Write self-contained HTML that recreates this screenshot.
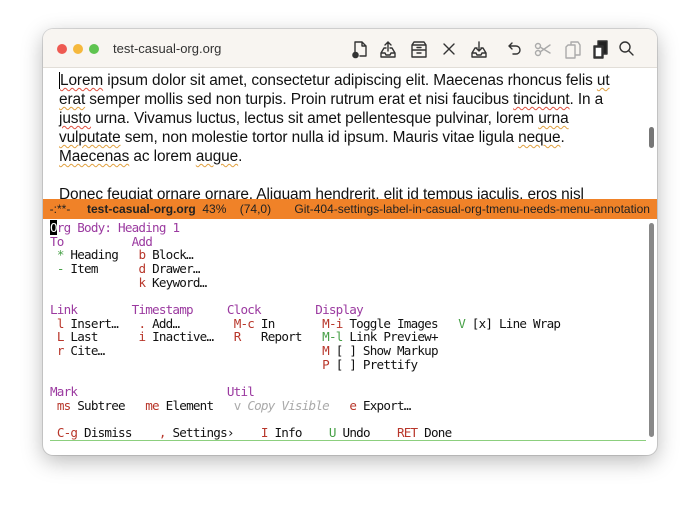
<!DOCTYPE html>
<html><head><style>
*{margin:0;padding:0;box-sizing:border-box}
body{width:700px;height:511px;background:#fff;position:relative;overflow:hidden;font-family:"Liberation Sans",sans-serif}
.win{position:absolute;left:43px;top:29px;width:614px;height:426px;border-radius:10px;background:#fff;box-shadow:0 6px 22px rgba(0,0,0,.28),0 0 0 1px rgba(0,0,0,.12);overflow:hidden}
.tb{position:absolute;left:0;top:0;width:614px;height:39px;background:#f8f5f1;border-bottom:1px solid #e2ded8}
.dot{position:absolute;top:15px;width:10px;height:10px;border-radius:50%}
.title{position:absolute;left:70px;top:12px;font-size:13px;color:#333}
.ic{position:absolute;top:9px}
.txt{position:absolute;left:16px;top:42px;width:590px;font-size:15.4px;line-height:19px;color:#111;letter-spacing:-.1px}
.sq{text-decoration:underline wavy #e05040;text-decoration-thickness:1px;text-underline-offset:2px}
.sq2{text-decoration:underline wavy #e0a040;text-decoration-thickness:1px;text-underline-offset:2px}
.ml{position:absolute;left:0;top:170px;width:614px;height:20px;background:#f08228;font-size:12px;color:#222;line-height:20px;white-space:pre}
.menu{position:absolute;left:7px;top:192px;font-family:"DejaVu Sans Mono",monospace;font-size:12.6px;letter-spacing:-0.78px;line-height:13.65px;white-space:pre;color:#111}
.p{color:#9b3aa0}.r{color:#b8362a}.g{color:#47a047}.d{color:#aaa;font-style:italic}.dv{color:#aaa}
.sb{position:absolute;width:5px;border-radius:3px;background:#777}
</style></head><body>
<div class="win">
<div class="tb">
<div class="dot" style="left:14px;background:#ee5a52"></div>
<div class="dot" style="left:30px;background:#f5b83d"></div>
<div class="dot" style="left:46px;background:#5fc450"></div>
<div class="title">test-casual-org.org</div>
<svg class="ic" style="left:308px" width="300" height="22" viewBox="0 0 300 22" fill="none" stroke="#333" stroke-width="1.4" stroke-linecap="round" stroke-linejoin="round">
<path d="M4 17V4h7l4 4v10H9M11 4v4h4"/><circle cx="4.5" cy="17" r="2.6" fill="#333"/>
<path d="M35 10h-2l-3 5v4h14v-4l-3-5h-2M30 15h4l1 2h4l1-2h4M37 13V4M34 7l3-3 3 3"/>
<path d="M61 7h14v12H61zM61 12h14M61 7l2-3h10l2 3M66 15h4M66 9.5h4"/>
<path d="M93 6l10 10M103 6l-10 10"/>
<path d="M126 10h-2l-3 5v4h14v-4l-3-5h-2M121 15h4l1 2h4l1-2h4M128 4v9M125 10l3 3 3-3"/>
<path d="M158 8h7a4 4 0 010 8h-3M158 8l3-3M158 8l3 3"/>
<g stroke="#aaa"><circle cx="187" cy="8" r="2.5"/><circle cx="187" cy="15" r="2.5"/><path d="M189 9l10 6M189 14l10-7"/>
<path d="M217 7h7v13h-9V9zM220 7V4h7l2 3v10h-5"/></g>
<path d="M243 8h9v12h-9zM247 8V3h9v13h-4" fill="#222"/><path d="M244 9h7v10h-7z" fill="#fff"/>
<circle cx="274" cy="9" r="5"/><path d="M278 13l4 4"/>
</svg>
</div>
<div class="txt"><span style="border-left:1.5px solid #000"></span><span class="sq">Lorem</span> ipsum dolor sit amet, consectetur adipiscing elit. Maecenas rhoncus felis <span class="sq2">ut</span><br><span class="sq2">erat</span> semper mollis sed non turpis. Proin rutrum erat et nisi faucibus <span class="sq">tincidunt</span>. In a<br><span class="sq">justo</span> urna. Vivamus luctus, lectus sit amet pellentesque pulvinar, lorem <span class="sq2">urna</span><br><span class="sq2">vulputate</span> sem, non molestie tortor nulla id ipsum. Mauris vitae ligula <span class="sq2">neque</span>.<br><span class="sq2">Maecenas</span> ac lorem <span class="sq2">augue</span>.<br><br>Donec feugiat ornare ornare. Aliquam hendrerit, elit id tempus iaculis, eros nisl</div>
<div class="sb" style="left:606px;top:98px;height:21px"></div>
<div class="ml">  -:**-     <b>test-casual-org.org</b>  43%    (74,0)       Git-404-settings-label-in-casual-org-tmenu-needs-menu-annotation</div>
<div class="menu"><span style="background:#000;color:#fff">O</span><span class="p">rg Body: Heading 1</span>
<span class="p">To          Add</span>
 <span class="g">*</span> Heading   <span class="r">b</span> Block…
 <span class="g">-</span> Item      <span class="r">d</span> Drawer…
             <span class="r">k</span> Keyword…

<span class="p">Link        Timestamp     Clock        Display</span>
 <span class="r">l</span> Insert…   <span class="r">.</span> Add…        <span class="r">M-c</span> In       <span class="r">M-i</span> Toggle Images   <span class="g">V</span> [x] Line Wrap
 <span class="r">L</span> Last      <span class="r">i</span> Inactive…   <span class="r">R</span>   Report   <span class="g">M-l</span> Link Preview+
 <span class="r">r</span> Cite…                                <span class="r">M</span> [ ] Show Markup
                                        <span class="r">P</span> [ ] Prettify

<span class="p">Mark                      Util</span>
 <span class="r">ms</span> Subtree   <span class="r">me</span> Element   <span class="dv">v</span> <span class="d">Copy Visible</span>   <span class="r">e</span> Export…

 <span class="r">C-g</span> Dismiss    <span class="r">,</span> Settings›    <span class="r">I</span> Info    <span class="g">U</span> Undo    <span class="r">RET</span> Done</div>
<div style="position:absolute;left:7px;top:411px;width:596px;height:1px;background:#8ccf7e"></div>
<div class="sb" style="left:606px;top:194px;height:214px;background:#888"></div>
</div>
</body></html>
